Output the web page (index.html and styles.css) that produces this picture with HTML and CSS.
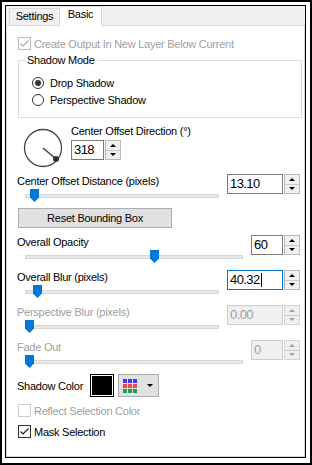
FILE: index.html
```html
<!DOCTYPE html>
<html lang="en">
<head>
    <meta charset="UTF-8">
    <meta name="viewport" content="width=device-width, initial-scale=1.0">
    <title>Drop Shadow</title>
    <link rel="stylesheet" href="styles.css">
</head>
<body>

    <div class="frame">
        <div class="dialog">

            <!-- Tab strip -->
            <div class="tabs">
                <div class="tab">Settings</div>
                <div class="tab active">Basic</div>
            </div>

            <div class="page">
                <div class="check disabled">
                    <span class="box">
                        <svg width="11" height="11" viewBox="0 0 11 11"><polyline points="1.5,5.5 4,8 9.5,2.5"/></svg>
                    </span>
                    Create Output In New Layer Below Current
                </div>

                <fieldset class="group">
                    <legend>Shadow Mode</legend>
                    <div class="radio on"><span class="circle"></span>Drop Shadow</div>
                    <div class="radio"><span class="circle"></span>Perspective Shadow</div>
                </fieldset>

                <!-- Direction dial -->
                <div class="dir-row">
                    <svg class="dial" width="40" height="40" viewBox="0 0 40 40">
                        <circle cx="20" cy="20" r="18.5"/>
                        <line x1="20" y1="20" x2="33" y2="31"/>
                        <circle class="knob" cx="33" cy="31" r="3"/>
                    </svg>
                    <div class="dir-ctrl">
                        <div class="lbl">Center Offset Direction (°)</div>
                        <div class="spin">
                            <div class="field w-sm">318</div>
                            <div class="arrows"><span class="up"></span><span class="down"></span></div>
                        </div>
                    </div>
                </div>

                <div class="srow first">
                    <div class="scol">
                        <div class="lbl">Center Offset Distance (pixels)</div>
                        <div class="slider"><div class="track"></div><span class="thumb" style="left:5px"></span></div>
                    </div>
                    <div class="spin">
                        <div class="field w-lg">13.10</div>
                        <div class="arrows"><span class="up"></span><span class="down"></span></div>
                    </div>
                </div>

                <button class="reset">Reset Bounding Box</button>

                <div class="srow">
                    <div class="scol">
                        <div class="lbl">Overall Opacity</div>
                        <div class="slider"><div class="track"></div><span class="thumb" style="left:125px"></span></div>
                    </div>
                    <div class="spin">
                        <div class="field w-md">60</div>
                        <div class="arrows"><span class="up"></span><span class="down"></span></div>
                    </div>
                </div>

                <div class="srow">
                    <div class="scol">
                        <div class="lbl">Overall Blur (pixels)</div>
                        <div class="slider"><div class="track"></div><span class="thumb" style="left:8px"></span></div>
                    </div>
                    <div class="spin">
                        <div class="field w-lg focus">40.32<span class="caret"></span></div>
                        <div class="arrows"><span class="up"></span><span class="down"></span></div>
                    </div>
                </div>

                <div class="srow disabled">
                    <div class="scol">
                        <div class="lbl">Perspective Blur (pixels)</div>
                        <div class="slider"><div class="track"></div><span class="thumb" style="left:0px"></span></div>
                    </div>
                    <div class="spin">
                        <div class="field w-lg">0.00</div>
                        <div class="arrows"><span class="up"></span><span class="down"></span></div>
                    </div>
                </div>

                <div class="srow disabled">
                    <div class="scol">
                        <div class="lbl">Fade Out</div>
                        <div class="slider"><div class="track"></div><span class="thumb" style="left:0px"></span></div>
                    </div>
                    <div class="spin">
                        <div class="field w-md">0</div>
                        <div class="arrows"><span class="up"></span><span class="down"></span></div>
                    </div>
                </div>

                <!-- Shadow colour picker -->
                <div class="color-row">
                    <span class="color-lbl">Shadow Color</span>
                    <span class="swatch"></span>
                    <span class="color-btn">
                        <svg width="15" height="14" viewBox="0 0 15 14">
                            <rect x="0" y="0" width="4" height="4" fill="#3b3bf5"/>
                            <rect x="5" y="0" width="4" height="4" fill="#3b3bf5"/>
                            <rect x="10" y="0" width="4" height="4" fill="#3b3bf5"/>
                            <rect x="0" y="5" width="4" height="4" fill="#f04848"/>
                            <rect x="5" y="5" width="4" height="4" fill="#f04848"/>
                            <rect x="10" y="5" width="4" height="4" fill="#f04848"/>
                            <rect x="0" y="10" width="4" height="4" fill="#1e9e48"/>
                            <rect x="5" y="10" width="4" height="4" fill="#1e9e48"/>
                            <rect x="10" y="10" width="4" height="4" fill="#1e9e48"/>
                        </svg>
                        <span class="drop"></span>
                    </span>
                </div>

                <div class="check tall disabled off"><span class="box"></span>Reflect Selection Color</div>
                <div class="check tall">
                    <span class="box">
                        <svg width="11" height="11" viewBox="0 0 11 11"><polyline points="1.5,5.5 4,8 9.5,2.5"/></svg>
                    </span>
                    Mask Selection
                </div>
            </div>
        </div>
    </div>

</body>
</html>
```

FILE: styles.css
```css
* {
    box-sizing: border-box;
}

body {
    margin: 0;
    font-family: "Liberation Sans", Arial, sans-serif;
    font-size: 11px;
    letter-spacing: -0.25px;
    color: #000;
    background-color: #fff;
}

/* Black frame round the screenshot */
.frame {
    width: 312px;
    height: 465px;
    border: 2px solid #000;
    padding: 3px 4px 5px 3px;
}

.dialog {
    height: 100%;
    border: 1px solid #000;
    display: flex;
    flex-direction: column;
}

/* Tabs */
.tabs {
    height: 20px;
    display: flex;
    align-items: flex-end;
    background-color: #f0f0f0;
    border-bottom: 1px solid #d9d9d9;
    padding-left: 3px;
}

.tab {
    width: 51px;
    height: 17px;
    border: 1px solid #d9d9d9;
    border-bottom: none;
    text-align: center;
    line-height: 15px;
}

.tab.active {
    width: 42px;
    height: 20px;
    margin-bottom: -1px;
    background-color: #fff;
    border-left: none;
    line-height: 15px;
}

.page {
    flex: 1;
    border: 1px solid #d9d9d9;
    border-top: none;
    padding: 11px 4px 0 10px;
}

/* Checkboxes */
.check {
    display: flex;
    align-items: center;
    height: 13px;
    margin-left: 1px;
}

.check.tall {
    height: 21px;
}

.check.tall:first-of-type {
    margin-top: 3px;
}

.check .box {
    width: 13px;
    height: 13px;
    border: 1px solid #333;
    background-color: #fff;
    margin-right: 3px;
    flex-shrink: 0;
}

.check .box svg {
    display: block;
}

.check .box polyline {
    fill: none;
    stroke: #222;
    stroke-width: 1.2;
}

.check.disabled {
    color: #a0a0a0;
}

.check.disabled .box {
    border-color: #bcbcbc;
}

.check.disabled polyline {
    stroke: #a8a8a8;
}

.check.off .box {
    border-color: #cccccc;
}

/* Shadow Mode group */
.group {
    margin: 4px -2px 0 1px;
    padding: 7px 6px 9px 6px;
    border: 1px solid #dcdcdc;
}

.group legend {
    padding: 0 2px;
    line-height: 13px;
}

.radio {
    display: flex;
    align-items: center;
    height: 17px;
    margin-left: 7px;
}

.radio .circle {
    width: 12px;
    height: 12px;
    border: 1px solid #333;
    border-radius: 50%;
    margin-right: 6px;
    display: flex;
    align-items: center;
    justify-content: center;
}

.radio.on .circle::after {
    content: "";
    width: 6px;
    height: 6px;
    border-radius: 50%;
    background-color: #333;
}

/* Direction */
.dir-row {
    display: flex;
    align-items: flex-start;
    margin-top: 6px;
}

.dial {
    margin: 4px 0 0 6px;
}

.dial circle {
    fill: none;
    stroke: #444;
    stroke-width: 1.3;
}

.dial line {
    stroke: #444;
    stroke-width: 1.5;
}

.dial .knob {
    fill: #333;
    stroke: none;
}

.dir-ctrl {
    margin-left: 8px;
}

.dir-ctrl .spin {
    margin-top: 2px;
}

.lbl {
    height: 14px;
    line-height: 14px;
    white-space: nowrap;
}

/* Spin boxes */
.spin {
    display: flex;
    height: 20px;
}

.field {
    height: 20px;
    border: 1px solid #7a7a7a;
    background-color: #fff;
    font-size: 13px;
    letter-spacing: -0.6px;
    line-height: 18px;
    padding-left: 2px;
    display: flex;
    align-items: center;
}

.w-sm { width: 33px; }
.w-md { width: 32px; }
.w-lg { width: 56px; }

.field.focus {
    border-color: #0078d7;
}

.caret {
    width: 1px;
    height: 14px;
    background-color: #000;
    margin-left: 1px;
}

.arrows {
    width: 16px;
    margin-left: 1px;
    display: flex;
    flex-direction: column;
    border: 1px solid #b9b9b9;
    background-color: #f0f0f0;
}

.arrows span {
    flex: 1;
    display: flex;
    align-items: center;
    justify-content: center;
}

.arrows .up {
    border-bottom: 1px solid #c8c8c8;
}

.arrows .up::after {
    content: "";
    border-left: 3px solid transparent;
    border-right: 3px solid transparent;
    border-bottom: 3px solid #000;
}

.arrows .down::after {
    content: "";
    border-left: 3px solid transparent;
    border-right: 3px solid transparent;
    border-top: 3px solid #000;
}

/* Slider rows */
.srow {
    display: flex;
    margin-top: 7px;
}

.srow.first {
    margin-top: 6px;
}

.scol {
    flex: 1;
}

.slider {
    position: relative;
    height: 14px;
    margin: 0 8px;
}

.track {
    position: absolute;
    left: 0;
    right: 0;
    top: 6px;
    height: 4px;
    background-color: #e7e7e7;
    border: 1px solid #d6d6d6;
}

.thumb {
    position: absolute;
    top: 1px;
    width: 9px;
    height: 13px;
    background-color: #0078d7;
    clip-path: polygon(0 0, 100% 0, 100% 66%, 50% 100%, 0 66%);
}

.srow.disabled .lbl {
    color: #a0a0a0;
}

.srow.disabled .field {
    background-color: #f0f0f0;
    border-color: #cccccc;
    color: #9a9fa8;
}

.srow.disabled .arrows {
    border-color: #d5d5d5;
}

.srow.disabled .arrows .up::after {
    border-bottom-color: #a0a0a0;
}

.srow.disabled .arrows .down::after {
    border-top-color: #a0a0a0;
}

/* Reset button */
.reset {
    display: block;
    width: 154px;
    height: 20px;
    margin: 6px 0 0 1px;
    padding: 0;
    background-color: #e1e1e1;
    border: 1px solid #adadad;
    font-family: inherit;
    font-size: 11px;
    letter-spacing: -0.25px;
    color: #000;
}

/* Shadow color */
.color-row {
    display: flex;
    align-items: center;
    height: 23px;
    margin-top: 6px;
    margin-bottom: 3px;
}

.color-lbl {
    width: 73px;
}

.swatch {
    width: 24px;
    height: 23px;
    border: 1px solid #000;
    padding: 1px;
    background-color: #fff;
}

.swatch::after {
    content: "";
    display: block;
    width: 100%;
    height: 100%;
    background-color: #000;
}

.color-btn {
    width: 41px;
    height: 23px;
    margin-left: 4px;
    background-color: #e1e1e1;
    border: 1px solid #adadad;
    display: flex;
    align-items: center;
    padding-left: 4px;
}

.drop {
    margin-left: 9px;
    border-left: 3px solid transparent;
    border-right: 3px solid transparent;
    border-top: 3px solid #000;
}
```
